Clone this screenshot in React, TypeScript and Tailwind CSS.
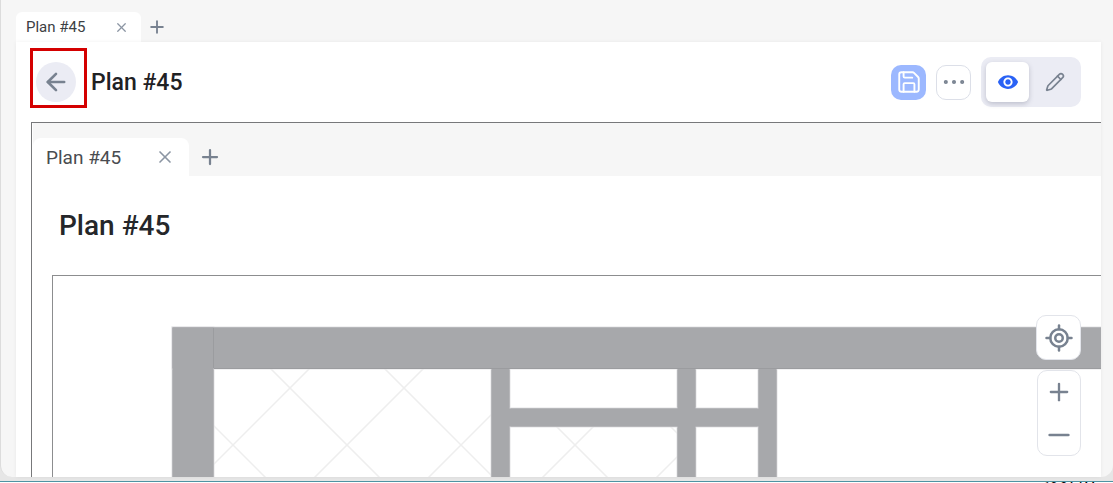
import { ArrowLeft, X, Plus, Minus, Save, Pencil, Ellipsis, LocateFixed } from "lucide-react";

const font = "font-['Roboto',sans-serif]";

function FloorPlan() {
  // diagonal hatch lines, x+y and x-y spaced 114px apart (page coords)
  const offsets = [-4, -3, -2, -1, 0, 1, 2, 3, 4, 5, 6];
  return (
    <svg className="absolute left-0 top-0" width="1050" height="210" viewBox="53 276 1050 210">
      <defs>
        <clipPath id="hatch">
          <rect x="214" y="369" width="277" height="120" />
          <rect x="510" y="427" width="167" height="60" />
        </clipPath>
      </defs>
      <g clipPath="url(#hatch)" stroke="#eeeeee" strokeWidth="1.5">
        {offsets.map((k) => (
          <line key={"a" + k} x1={0} y1={678 + 114 * k} x2={900} y2={678 + 114 * k - 900} />
        ))}
        {offsets.map((k) => (
          <line key={"b" + k} x1={0} y1={98 - 114 * k} x2={900} y2={998 - 114 * k} />
        ))}
      </g>
      <g fill="#a7a8ab" stroke="#e4e4e5" strokeWidth="1">
        <rect x="172" y="327" width="42" height="170" />
        <rect x="172" y="327" width="960" height="42" />
        <rect x="491" y="369" width="19" height="120" />
        <rect x="677" y="369" width="19" height="120" />
        <rect x="758" y="369" width="19" height="120" />
        <rect x="510" y="408" width="248" height="19" />
      </g>
      <g fill="#a7a8ab">
        <rect x="172.5" y="327.5" width="41" height="170" />
        <rect x="172.5" y="327.5" width="960" height="41" />
        <rect x="491.5" y="360" width="18" height="130" />
        <rect x="677.5" y="360" width="18" height="130" />
        <rect x="758.5" y="360" width="18" height="130" />
        <rect x="500" y="408.5" width="270" height="18" />
      </g>
      <line x1="213.5" y1="328" x2="213.5" y2="368" stroke="#9b9c9f" strokeWidth="1" />
      <line x1="214" y1="368.5" x2="1132" y2="368.5" stroke="#9b9c9f" strokeWidth="1" />
    </svg>
  );
}

function EyeIcon() {
  return (
    <svg width="22" height="22" viewBox="0 0 24 24" fill="#2a62f5">
      <path d="M12 4.5C7 4.5 2.73 7.61 1 12c1.73 4.39 6 7.5 11 7.5s9.27-3.11 11-7.5c-1.73-4.39-6-7.5-11-7.5zM12 17c-2.76 0-5-2.24-5-5s2.24-5 5-5 5 2.24 5 5-2.24 5-5 5zm0-8c-1.66 0-3 1.34-3 3s1.34 3 3 3 3-1.34 3-3-1.34-3-3-3z" />
    </svg>
  );
}

export default function App() {
  return (
    <div className={`flex h-[483px] w-[1113px] flex-col overflow-hidden bg-[#e6e6e6] ${font}`}>
      <div className="flex h-[477px] shrink-0 flex-col rounded-b-[12px] border-l border-[#dcdcdc] bg-[#f6f6f6] pl-[15px] pr-3 pt-3">
        <div className="flex h-[30px] shrink-0 items-stretch">
          <div className="flex w-[125px] items-center rounded-t-[6px] bg-white pl-2.5 text-[15px] text-[#3c4043]">
            <span>Plan #45</span>
            <X size={15} className="ml-[29px] text-[#8b95a3]" strokeWidth={2} />
          </div>
          <div className="ml-[6px] flex items-center">
            <Plus size={20} className="text-[#788290]" strokeWidth={2.25} />
          </div>
        </div>

        <div className="flex min-h-0 flex-1 flex-col bg-white pl-[15px] shadow-[0_0_4px_rgba(0,0,0,0.06)]">
          <div className="flex h-[80px] shrink-0 items-center">
            <div className="ml-[-1px] flex h-[60px] w-[57px] -translate-y-1 items-end border-[3px] border-[#d40000] pb-[3px] pl-[3px]">
              <button className="flex h-10 w-10 items-center justify-center rounded-full bg-[#ebecf4]">
                <ArrowLeft size={28} className="text-[#788290]" strokeWidth={2.25} />
              </button>
            </div>
            <h1 className="ml-1 pt-0.5 text-[23px] font-medium text-[#1f2124]">Plan #45</h1>
            <div className="ml-auto mr-5 flex items-center gap-2.5">
              <button className="flex h-[35px] w-[35px] items-center justify-center rounded-[10px] bg-[#9cb8ff]">
                <Save size={26} className="text-white" strokeWidth={1.75} />
              </button>
              <button className="flex h-[35px] w-[35px] items-center justify-center rounded-[10px] border border-[#dcdfe8] bg-white">
                <Ellipsis size={28} className="text-[#788290]" strokeWidth={1.5} />
              </button>
              <div className="flex h-[50px] w-[100px] items-center rounded-[10px] bg-[#ebecf4] p-[5px]">
                <div className="flex h-10 w-[43px] items-center justify-center rounded-[6px] bg-white shadow-[0_2px_5px_rgba(60,64,90,0.25)]">
                  <EyeIcon />
                </div>
                <div className="flex h-10 flex-1 items-center justify-center pl-1">
                  <Pencil size={20} className="text-[#788290]" strokeWidth={2} />
                </div>
              </div>
            </div>
          </div>

          <div className="flex min-h-0 flex-1 flex-col overflow-hidden border-l border-t border-[#77787a] pl-px">
            <div className="flex h-[53px] shrink-0 items-end bg-[#f6f6f6]">
              <div className="flex h-[38px] w-[156px] items-center rounded-t-[8px] bg-white pl-[13px] text-[19px] text-[#494c50]">
                <span className="pt-0.5">Plan #45</span>
                <X size={20} className="ml-[34px] text-[#8b95a3]" strokeWidth={2} />
              </div>
              <div className="ml-[9px] flex h-[38px] items-center">
                <Plus size={24} className="text-[#788290]" strokeWidth={2.25} />
              </div>
            </div>
            <div className="flex h-[99px] shrink-0 items-center pl-[26px]">
              <h2 className="text-[28px] font-medium text-[#25272a]">Plan #45</h2>
            </div>
            <div className="relative ml-[19px] min-h-0 flex-1 overflow-hidden border-l border-t border-[#8c8d8f]">
              <FloorPlan />
              <div className="absolute right-5 top-[39px] flex h-[45px] w-[45px] items-center justify-center rounded-[10px] border border-[#e2e4ea] bg-white">
                <LocateFixed size={30} className="text-[#788290]" strokeWidth={2} />
              </div>
              <div className="absolute right-5 top-[94px] flex h-[86px] w-[44px] flex-col items-center justify-between rounded-[10px] border border-[#e2e4ea] bg-white pb-1 pt-[7px]">
                <Plus size={28} className="text-[#788290]" strokeWidth={2} />
                <Minus size={32} className="text-[#788290]" strokeWidth={2} />
              </div>
            </div>
          </div>
        </div>
      </div>
      <div className="mt-1 h-px shrink-0 bg-[#4f93a3]" />
      <div className="flex h-px shrink-0 justify-end overflow-hidden bg-white pr-[18px] text-xs leading-[12px] text-black">
        <span className="-mt-px">10:24 AM</span>
      </div>
    </div>
  );
}
